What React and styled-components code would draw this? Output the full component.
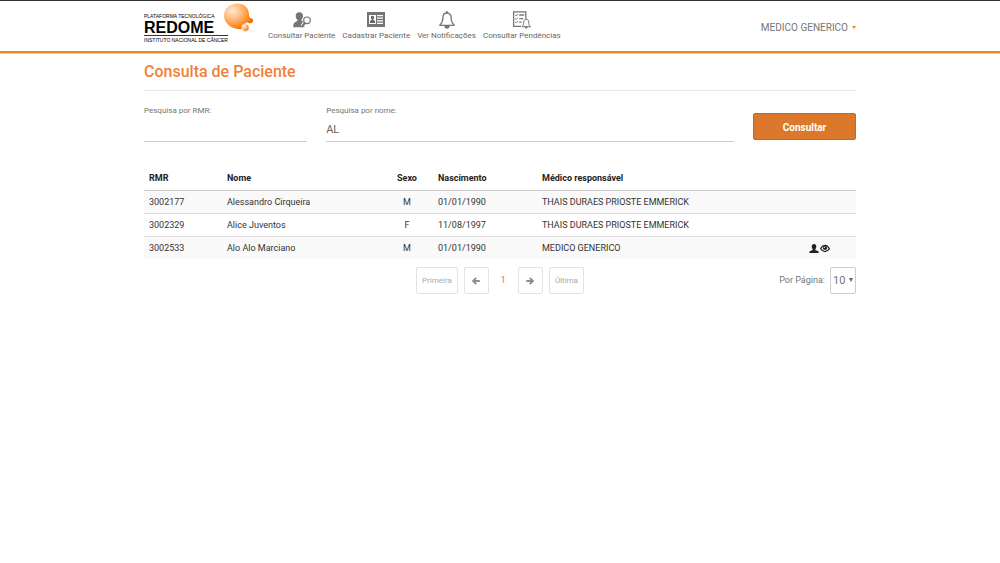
import React, { useState } from "react";
import styled, { createGlobalStyle } from "styled-components";

const patients = [
  {
    rmr: "3002177",
    name: "Alessandro Cirqueira",
    sex: "M",
    birth: "01/01/1990",
    doctor: "THAIS DURAES PRIOSTE EMMERICK",
  },
  {
    rmr: "3002329",
    name: "Alice Juventos",
    sex: "F",
    birth: "11/08/1997",
    doctor: "THAIS DURAES PRIOSTE EMMERICK",
  },
  {
    rmr: "3002533",
    name: "Alo Alo Marciano",
    sex: "M",
    birth: "01/01/1990",
    doctor: "MEDICO GENERICO",
    editable: true,
  },
];

const SearchUserIcon = () => (
  <svg width="18" height="16" viewBox="0 0 18 16" fill="#757575">
    <path d="M6.300.200c2.400 0 3.700 1.600 3.700 3.800 0 1.500-.6 2.800-1.500 3.600v1.200l3.500 1.500v4.900H.300c0-2.600.2-4.200 1.400-4.800l2.600-1.500V7.600C3.300 6.800 2.700 5.500 2.700 4 2.700 1.800 4 .2 6.300.2z" />
    <path d="M12 10.700l-2.500 3.500" stroke="#fff" strokeWidth="4.200" />
    <circle cx="14" cy="8.300" r="3.300" fill="#fff" stroke="#757575" strokeWidth="1.200" />
    <path d="M11.700 11.200l-2 2.800" stroke="#757575" strokeWidth="2.200" strokeLinecap="round" />
  </svg>
);

const CardIcon = () => (
  <svg width="18" height="15" viewBox="0 0 18 15">
    <path fill="#757575" d="M0 0h18v15H0z" />
    <path fill="#fff" d="M2 3h7v9H2zM10 3h6v1.200h-6zM10 5.600h6v1.200h-6zM10 8.200h6v1.200h-6zM10 10.800h6V12h-6z" />
    <path fill="#666" d="M5.500 3.800c1 0 1.600.7 1.600 1.700 0 .8-.3 1.400-.8 1.800v.6c1.200.4 1.900.8 1.900 3.100H2.800c0-2.300.7-2.700 1.900-3.100v-.6c-.5-.4-.8-1-.8-1.800 0-1 .6-1.700 1.600-1.700z" />
  </svg>
);

const BellIcon = () => (
  <svg width="16" height="18" viewBox="0 0 16 18" fill="none" stroke="#757575" strokeWidth="1.300">
    <path d="M8 2C5 2 3.900 4.200 3.900 6.600c0 3.900-.9 5.600-3.100 7.700h14.400c-2.200-2.100-3.100-3.800-3.100-7.700C12.100 4.200 11 2 8 2z" strokeLinejoin="round" />
    <path d="M8 .3V2" strokeWidth="1.800" />
    <path d="M6 14.800c.1 1.500.9 2.300 2 2.300s1.900-.8 2-2.300z" fill="#757575" />
  </svg>
);

const PendingIcon = () => (
  <svg width="19" height="18" viewBox="0 0 19 18" fill="none" stroke="#757575" strokeWidth="1.300">
    <path d="M9 15.300H1.600V.900h12.200v6.300" />
    <path d="M3.300 4l.9.900L5.900 3M3.300 7.500l.9.900 1.700-1.900M3.300 11l.9.900L5.900 10" strokeWidth="1" />
    <path d="M7.200 4h5M7.200 7.600h4M7.200 11.200h2.500" />
    <path
      d="M14.200 8.300c-1.800 0-2.500 1.300-2.500 2.800 0 2.200-.4 3.400-1.900 4.600h8.800c-1.500-1.200-1.900-2.400-1.900-4.600 0-1.500-.7-2.800-2.500-2.800z"
      strokeWidth="1"
      strokeLinejoin="round"
    />
    <path d="M14.200 7.200v1" />
    <path d="M13 16c.1 1 .6 1.300 1.200 1.300s1.100-.3 1.200-1.300z" fill="#757575" strokeWidth=".5" />
  </svg>
);

const DropsIcon = () => (
  <svg width="31" height="29" viewBox="0 0 31 29">
    <defs>
      <radialGradient id="drop" cx="0.300" cy="0.300" r="0.750">
        <stop offset="0" stopColor="#ffe9d4" />
        <stop offset="0.450" stopColor="#ffb877" />
        <stop offset="0.800" stopColor="#fb8a1e" />
        <stop offset="1" stopColor="#f07000" />
      </radialGradient>
    </defs>
    <path
      fill="url(#drop)"
      d="M13.500.500C20.500 0 25.800 4.700 26 10.800c.1 2.300.2 3.400 1.200 4.200 1.900.1 2.900 1.100 2.900 2.600 0 1.600-1.200 2.700-2.800 2.700-1.300 0-2-.8-3.100-.8-1.800 0-2.200 1.800-2.200 3.600C21.900 26.300 18 27 12.500 25.400 6 24 1 19 1 12.500 1 5.700 6.500 1 13.500.5z"
    />
    <circle cx="22.500" cy="24.700" r="3.700" fill="url(#drop)" stroke="#fff" strokeWidth=".7" />
  </svg>
);

const UserIcon = () => (
  <svg width="10" height="9" viewBox="0 0 10 9" fill="#222">
    <path d="M5 0c1.500 0 2.300 1 2.300 2.500 0 1.100-.4 2.100-1 2.700v.7l2.500 1c.7.300.9.800.9 2.100H.300c0-1.300.2-1.800.9-2.100l2.500-1v-.7c-.6-.6-1-1.600-1-2.700C2.700 1 3.500 0 5 0z" />
  </svg>
);

const EyeIcon = () => (
  <svg width="10" height="9" viewBox="0 0 10 9" fill="none" stroke="#222">
    <path d="M.600 4.600C2 2.300 3.400 1.400 5 1.400s3 .9 4.400 3.200C8 6.800 6.600 7.600 5 7.600S2 6.800.600 4.600z" strokeWidth="1.100" />
    <circle cx="5" cy="4" r="2.100" fill="#222" stroke="none" />
    <circle cx="4.400" cy="3.300" r=".6" fill="#fff" stroke="none" />
  </svg>
);

const ArrowIcon = ({ right }) => (
  <svg width="8" height="8" viewBox="0 0 8 8" fill="none" stroke="#8c8c8c" strokeWidth="1.900">
    {right ? <path d="M.300 4h6.500M3.800.800L7 4 3.800 7.200" /> : <path d="M7.700 4H1.200M4.200.800L1 4l3.200 3.200" />}
  </svg>
);

const menu = [
  { label: "Consultar Paciente", icon: <SearchUserIcon /> },
  { label: "Cadastrar Paciente", icon: <CardIcon /> },
  { label: "Ver Notificações", icon: <BellIcon /> },
  { label: "Consultar Pendências", icon: <PendingIcon /> },
];

const App = () => {
  const [rmr, setRmr] = useState("");
  const [name, setName] = useState("AL");
  const [perPage, setPerPage] = useState("10");

  return (
    <>
      <GlobalStyle />
      <Header>
        <HeaderContent>
          <Logo href="#">
            <LogoText>
              <LogoLine>PLATAFORMA TECNOLÓGICA</LogoLine>
              <LogoName>REDOME</LogoName>
              <LogoLine $ruled>INSTITUTO NACIONAL DE CÂNCER</LogoLine>
            </LogoText>
            <LogoMark>
              <DropsIcon />
            </LogoMark>
          </Logo>
          <Menu>
            {menu.map((item) => (
              <MenuLink href="#" key={item.label}>
                <MenuIcon>{item.icon}</MenuIcon>
                {item.label}
              </MenuLink>
            ))}
          </Menu>
          <UserButton type="button">
            MEDICO GENERICO
            <Caret />
          </UserButton>
        </HeaderContent>
      </Header>

      <Main>
        <Title>Consulta de Paciente</Title>
        <SearchForm onSubmit={(e) => e.preventDefault()}>
          <Field $grow={2}>
            <FieldLabel htmlFor="rmr">Pesquisa por RMR:</FieldLabel>
            <TextInput id="rmr" value={rmr} onChange={(e) => setRmr(e.target.value)} />
          </Field>
          <Field $grow={5}>
            <FieldLabel htmlFor="nome">Pesquisa por nome:</FieldLabel>
            <TextInput id="nome" value={name} onChange={(e) => setName(e.target.value)} />
          </Field>
          <SubmitButton type="submit">Consultar</SubmitButton>
        </SearchForm>

        <Table>
          <thead>
            <tr>
              <HeadCell $width="78px">RMR</HeadCell>
              <HeadCell $width="159px">Nome</HeadCell>
              <HeadCell $width="52px" $center>
                Sexo
              </HeadCell>
              <HeadCell $width="104px">Nascimento</HeadCell>
              <HeadCell>Médico responsável</HeadCell>
              <HeadCell $width="52px" aria-label="Ações" />
            </tr>
          </thead>
          <tbody>
            {patients.map((patient) => (
              <Row key={patient.rmr}>
                <Cell>{patient.rmr}</Cell>
                <Cell>{patient.name}</Cell>
                <Cell $center>{patient.sex}</Cell>
                <Cell>{patient.birth}</Cell>
                <Cell>{patient.doctor}</Cell>
                <Cell>
                  {patient.editable ? (
                    <Actions>
                      <IconButton type="button" aria-label="Paciente">
                        <UserIcon />
                      </IconButton>
                      <IconButton type="button" aria-label="Visualizar">
                        <EyeIcon />
                      </IconButton>
                    </Actions>
                  ) : null}
                </Cell>
              </Row>
            ))}
          </tbody>
        </Table>

        <TableFooter>
          <Pagination aria-label="Paginação">
            <PageButton type="button">Primeira</PageButton>
            <PageButton type="button" aria-label="Anterior">
              <ArrowIcon />
            </PageButton>
            <CurrentPage>1</CurrentPage>
            <PageButton type="button" aria-label="Próxima">
              <ArrowIcon right />
            </PageButton>
            <PageButton type="button">Última</PageButton>
          </Pagination>
          <PerPage>
            <label htmlFor="porPagina">Por Página:</label>
            <SelectBox>
              <Select id="porPagina" value={perPage} onChange={(e) => setPerPage(e.target.value)}>
                <option>10</option>
                <option>20</option>
                <option>50</option>
              </Select>
              <SelectArrow />
            </SelectBox>
          </PerPage>
        </TableFooter>
      </Main>
    </>
  );
};

export default App;

const GlobalStyle = createGlobalStyle`
  * {
    box-sizing: border-box;
  }
  body {
    margin: 0;
    background: #fff;
    color: #333;
    font-family: Roboto, sans-serif;
    font-size: 9px;
    line-height: 13px;
  }
  button, input, select {
    font-family: inherit;
  }
  a {
    color: inherit;
    text-decoration: none;
  }
  svg {
    display: block;
  }
`;

const Header = styled.header`
  border-top: 1px solid #333;
  border-bottom: 2px solid #f58220;
  box-shadow: 0 1px 0 #f9cfa8;
`;

const HeaderContent = styled.div`
  display: flex;
  align-items: flex-start;
  width: 100%;
  max-width: 712px;
  height: 50px;
  margin: 0 auto;
`;

const Logo = styled.a`
  display: flex;
  position: relative;
  width: 110px;
  padding-top: 12px;
  color: #000;
  font-family: "Liberation Sans", Arial, sans-serif;
`;

const LogoText = styled.span`
  display: flex;
  flex-direction: column;
`;

const LogoLine = styled.span`
  align-self: flex-start;
  border-top: ${(props) => (props.$ruled ? "1px solid #333" : "none")};
  font-size: 5px;
  line-height: ${(props) => (props.$ruled ? "9px" : "7px")};
  white-space: nowrap;
`;

const LogoName = styled.span`
  font-size: 16px;
  font-weight: bold;
  line-height: 15px;
`;

const LogoMark = styled.span`
  position: absolute;
  top: 2px;
  right: 0;
`;

const Menu = styled.nav`
  display: flex;
  gap: 7px;
  margin-left: 14px;
`;

const MenuLink = styled.a`
  display: flex;
  flex-direction: column;
  align-items: center;
  padding-top: 9px;
  color: #666;
  font-size: 8px;
  line-height: 13px;
  white-space: nowrap;
`;

const MenuIcon = styled.span`
  display: flex;
  align-items: center;
  height: 19px;
`;

const UserButton = styled.button`
  display: flex;
  align-items: center;
  gap: 4px;
  margin: 18px 0 0 auto;
  padding: 0;
  border: none;
  background: none;
  color: #757575;
  font-size: 10px;
  line-height: 17px;
  cursor: pointer;
`;

const Caret = styled.span`
  border: 2px solid transparent;
  border-top: 3px solid #f58220;
  border-bottom: none;
`;

const Main = styled.main`
  width: 100%;
  max-width: 712px;
  margin: 0 auto;
`;

const Title = styled.h1`
  margin: 0;
  padding: 9px 0 8px;
  border-bottom: 1px solid #e8e8e8;
  color: #f0813a;
  font-size: 16px;
  font-weight: 500;
  line-height: 20px;
`;

const SearchForm = styled.form`
  display: flex;
  align-items: flex-start;
  gap: 19px;
  padding-top: 14px;
`;

const Field = styled.div`
  display: flex;
  flex: ${(props) => props.$grow} 1 0;
  flex-direction: column;
  min-width: 0;
`;

const FieldLabel = styled.label`
  color: #757575;
  font-size: 8px;
  line-height: 12px;
`;

const TextInput = styled.input`
  width: 100%;
  height: 25px;
  padding: 0;
  border: none;
  border-bottom: 1px solid #ccc;
  outline: none;
  background: none;
  color: #666;
  font-size: 11px;
`;

const SubmitButton = styled.button`
  width: 103px;
  height: 27px;
  margin-top: 8px;
  padding: 1px 0 0;
  border: 1px solid #c9671c;
  border-radius: 2px;
  background: #db782b;
  color: #fff;
  font-size: 10px;
  font-weight: 700;
  cursor: pointer;
`;

const Table = styled.table`
  width: 100%;
  margin-top: 25px;
  border-collapse: collapse;
  table-layout: fixed;
`;

const HeadCell = styled.th`
  width: ${(props) => props.$width || "auto"};
  height: 23px;
  padding: 1px 5px 0;
  border-bottom: 1px solid #ccc;
  color: #222;
  font-weight: 700;
  text-align: ${(props) => (props.$center ? "center" : "left")};
`;

const Row = styled.tr`
  &:nth-child(odd) {
    background: #f9f9f9;
  }
  & + & {
    border-top: 1px solid #ddd;
  }
`;

const Cell = styled.td`
  height: 23px;
  padding: 2px 5px 0;
  text-align: ${(props) => (props.$center ? "center" : "left")};
`;

const Actions = styled.div`
  display: flex;
  gap: 1px;
`;

const IconButton = styled.button`
  padding: 0;
  border: none;
  background: none;
  cursor: pointer;
`;

const TableFooter = styled.div`
  display: grid;
  grid-template-columns: 1fr auto 1fr;
  align-items: center;
  padding-top: 8px;
`;

const Pagination = styled.nav`
  display: flex;
  grid-column: 2;
  align-items: center;
  gap: 6px;
`;

const PageButton = styled.button`
  display: flex;
  align-items: center;
  justify-content: center;
  min-width: 25px;
  height: 27px;
  padding: 0 5px;
  border: 1px solid #e2e2e2;
  border-radius: 2px;
  background: #fff;
  color: #aaa;
  font-size: 8px;
  cursor: pointer;
`;

const CurrentPage = styled.span`
  width: 17px;
  color: #f5703a;
  text-align: center;
`;

const PerPage = styled.div`
  display: flex;
  align-items: center;
  justify-self: end;
  gap: 5px;
  color: #757575;
`;

const SelectBox = styled.div`
  position: relative;
`;

const Select = styled.select`
  appearance: none;
  width: 26px;
  height: 27px;
  padding: 0 0 0 2px;
  border: 1px solid #ccc;
  border-radius: 2px;
  background: #fff;
  color: #757575;
  font-size: 11px;
`;

const SelectArrow = styled.span`
  position: absolute;
  top: 11px;
  right: 3px;
  border: 2px solid transparent;
  border-top: 4px solid #666;
  border-bottom: none;
  pointer-events: none;
`;
